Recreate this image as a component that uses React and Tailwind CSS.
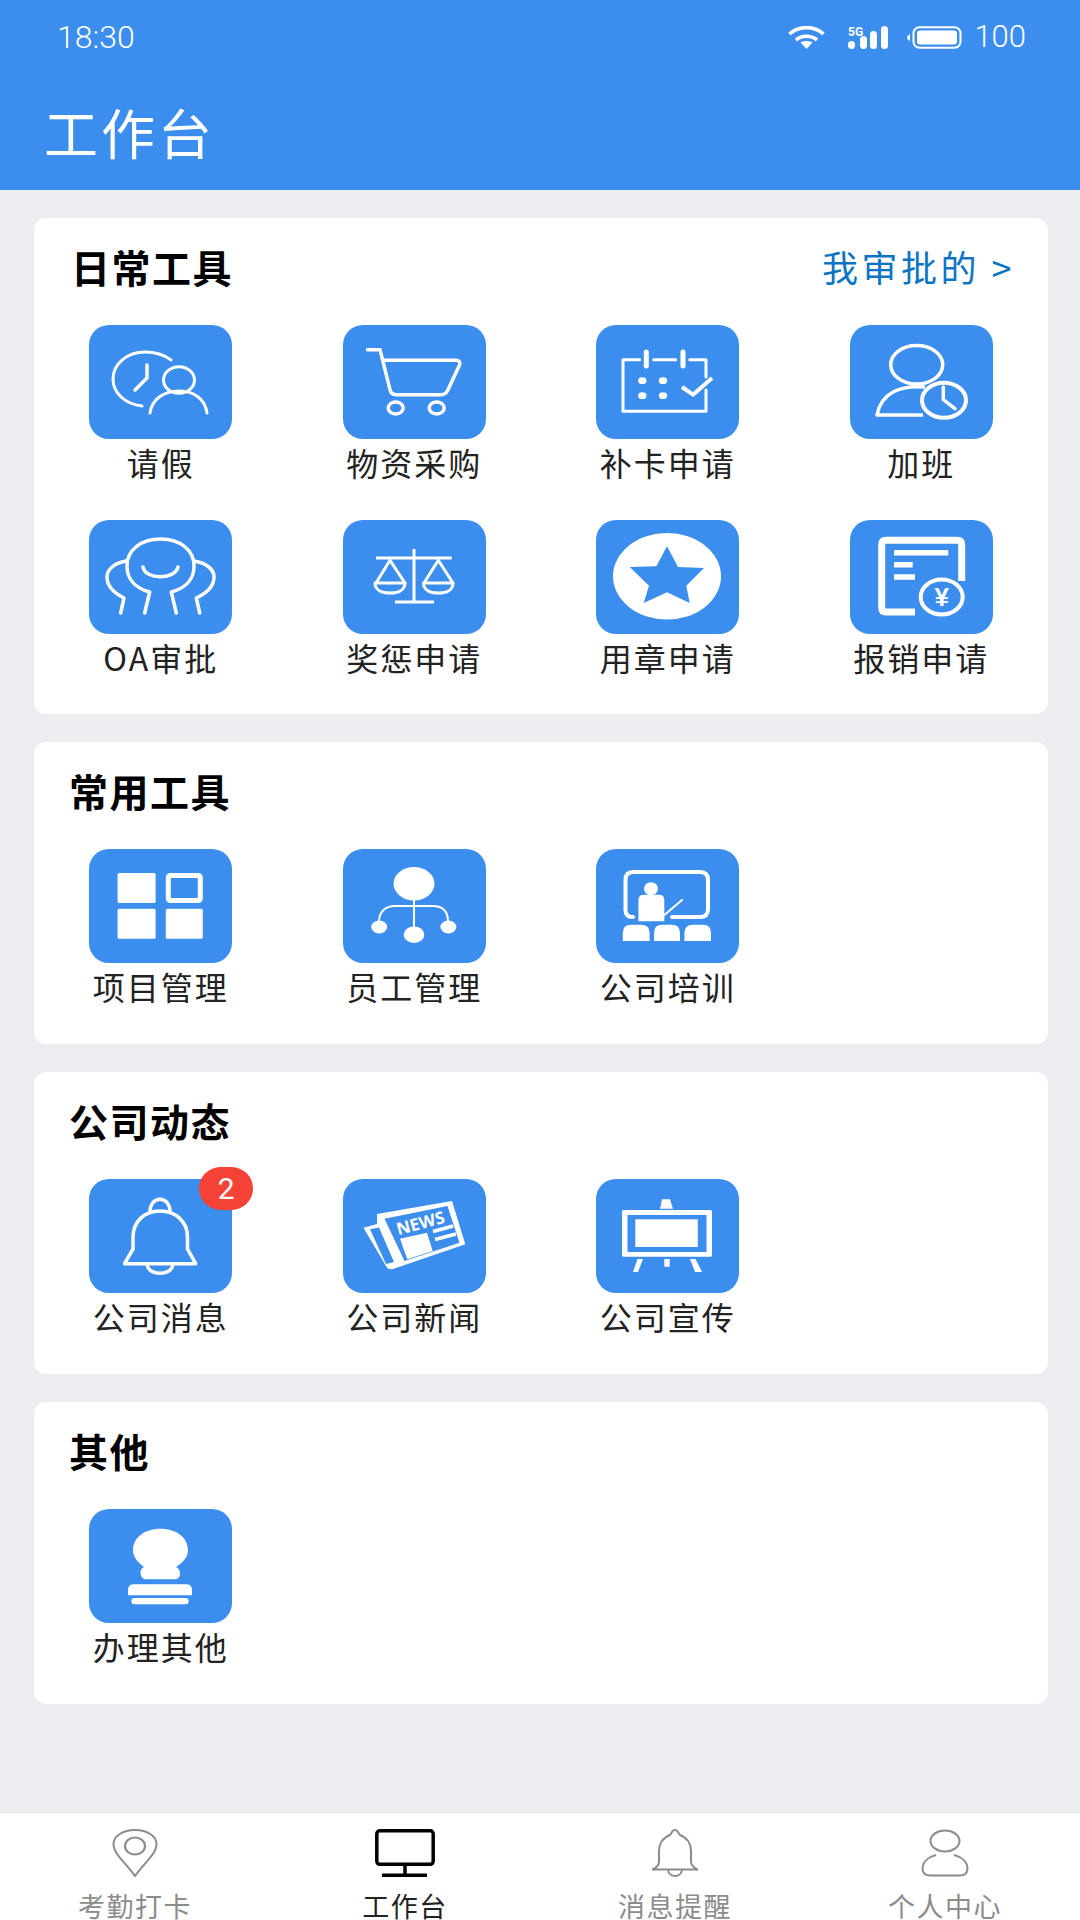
import React from "react";

const cjk = "font-['Noto_Sans_CJK_SC','Liberation_Sans',sans-serif]";

// every tile drawing uses the tile's own pixel box (143x114)
const Tile = ({ children, badge }) => (
  <div className="relative w-[143px] h-[114px] rounded-[20px] bg-[#3c8eee]">
    <svg
      viewBox="0 0 143 114"
      className="w-[143px] h-[114px]"
      fill="none"
      stroke="#fff"
      strokeWidth="3"
      strokeLinecap="round"
      strokeLinejoin="round"
    >
      {children}
    </svg>
    {badge && (
      <span className="absolute top-[-12px] right-[-21px] w-[54px] h-[43px] rounded-full bg-[#f44336] text-white text-[30px] leading-[43px] text-center font-['Roboto',sans-serif]">
        {badge}
      </span>
    )}
  </div>
);

const Leave = () => (
  <>
    <path d="M82 35C74 29 65 27 56 27C38 27 24 39 24 54C24 68 36 79 53 81" />
    <path d="M58 40V53L46 65" strokeWidth="3.5" />
    <ellipse cx="90" cy="55" rx="15.5" ry="13.3" />
    <path d="M61 88C63 74 75 66 90 66S116 74 118 88" />
  </>
);

const Cart = () => (
  <>
    <path d="M24.5 24.7H37L47 64.7Q48 69.7 53 69.7H98Q103 69.7 105 64.7L116.5 40Q118 35.3 113 35.3H40.3" strokeWidth="3.5" />
    <ellipse cx="52.7" cy="83" rx="7.5" ry="6" strokeWidth="3.5" />
    <ellipse cx="93.7" cy="83" rx="7.5" ry="6" strokeWidth="3.5" />
  </>
);

const Calendar = () => (
  <>
    <path d="M43.7 34.7H27V86.3H110V65M110 52V34.7H93.7M57.7 34.7H79.7" />
    <path d="M50.3 27V41M87 27V41" strokeWidth="5" />
    <g fill="#fff" stroke="none">
      <ellipse cx="46.3" cy="55.7" rx="4.2" ry="3.4" />
      <ellipse cx="67" cy="55.7" rx="4.2" ry="3.4" />
      <ellipse cx="46.3" cy="70.7" rx="4.2" ry="3.4" />
      <ellipse cx="67" cy="70.7" rx="4.2" ry="3.4" />
    </g>
    <path d="M86 62L97 69.7L116 53" strokeWidth="4" strokeLinecap="butt" />
  </>
);

const Overtime = () => (
  <>
    <ellipse cx="66.7" cy="39.7" rx="26" ry="19.3" strokeWidth="3.5" />
    <path d="M75 62C50 60 31 68 27 90H73" strokeWidth="3.5" strokeLinecap="butt" />
    <ellipse cx="94" cy="75.3" rx="22" ry="17.5" fill="#3c8eee" strokeWidth="4" />
    <path d="M93.3 62V74.7L105 83.7" strokeWidth="3.5" />
  </>
);

const Approve = () => (
  <g strokeWidth="3.5">
    <path d="M55.7 93L60.7 72C45 68 38 58 38 46C38 30 52 19 71.5 19C91 19 105 30 105 46C105 58 98 68 82.3 72L87.3 93" />
    <path d="M31.7 93L35 78C25 73 18 67 18 57C18 49 26 43 37 41" />
    <path d="M110.7 93L107.3 78C118 73 125 67 125 57C125 49 117 43 105 41" />
    <path d="M54 47C56 60 86 60 89 47" />
  </g>
);

const Scale = () => (
  <>
    <path d="M71 29V81M33 38H108.7M52 82H91" strokeLinecap="butt" />
    <path d="M47 40.3L33 63H62Z" />
    <path d="M32 63C32 70 39 73 47 73S62 70 62 63" />
    <path d="M95.3 40.3L81 63H110Z" />
    <path d="M80.5 63C80.5 70 87 73 95.3 73S110 70 110 63" />
  </>
);

const Seal = () => (
  <>
    <ellipse cx="71" cy="56.3" rx="54" ry="43.3" fill="#fff" stroke="none" />
    <path
      d="M71 26.3L82 47L108 48L90.3 65.7L93.7 83L71 72.3L47.7 83L53 65.7L33.7 47L60.3 46.3Z"
      fill="#3c8eee"
      stroke="none"
    />
  </>
);

const Expense = () => (
  <>
    <path
      d="M65 92H36Q31.7 92 31.7 88V24.5Q31.7 20.3 36 20.3H107Q111.7 20.3 111.7 24.5V61"
      strokeWidth="7"
      strokeLinecap="butt"
    />
    <path d="M44 32.7H98.3M44 44.7H62.7M44 57H65" strokeWidth="5.5" strokeLinecap="butt" />
    <ellipse cx="91.7" cy="77" rx="21" ry="17.5" strokeWidth="4" fill="#3c8eee" />
    <text
      x="91.7"
      y="86"
      textAnchor="middle"
      fill="#fff"
      stroke="none"
      fontSize="26"
      fontWeight="700"
      fontFamily="Liberation Sans, sans-serif"
    >
      ¥
    </text>
  </>
);

const Project = () => (
  <>
    <g fill="#fff" stroke="none">
      <rect x="28.6" y="24" width="38" height="30" rx="1.5" />
      <rect x="28.6" y="59.7" width="38" height="30" rx="1.5" />
      <rect x="76.8" y="59.7" width="37" height="30" rx="1.5" />
    </g>
    <rect x="79.3" y="26.5" width="32" height="25" rx="2" strokeWidth="5" />
  </>
);

const Staff = () => (
  <>
    <g fill="#fff" stroke="none">
      <ellipse cx="71" cy="34.7" rx="20.5" ry="16.7" />
      <ellipse cx="36.2" cy="78" rx="8" ry="6.5" />
      <ellipse cx="105.4" cy="78" rx="8" ry="6.5" />
      <ellipse cx="71" cy="85.7" rx="10.3" ry="8.3" />
    </g>
    <path d="M71 50V80M36 73C36 63 42 57 52 57H90C100 57 105 63 105 73" strokeWidth="2" />
  </>
);

const Training = () => (
  <>
    <path
      d="M37 68Q29.5 68 29.5 61V31Q29.5 23 37 23H104Q112 23 112 31V60Q112 68 104 68H76"
      strokeWidth="4"
    />
    <path d="M66 68L86 51" strokeWidth="2" />
    <g fill="#fff" stroke="none">
      <ellipse cx="55" cy="39.7" rx="7" ry="6.5" />
      <path d="M42.4 51Q42.4 45.7 48 45.7H63Q68.3 45.7 68.3 51V72.3H42.4Z" />
      <path d="M26.8 92V84Q26.8 75.7 35 75.7H45Q53.6 75.7 53.6 84V92Z" />
      <path d="M58 92V84Q58 75.7 66 75.7H76Q84 75.7 84 84V92Z" />
      <path d="M88.4 92V84Q88.4 75.7 97 75.7H107Q115 75.7 115 84V92Z" />
    </g>
  </>
);

const BellTile = () => (
  <g strokeWidth="3.5">
    <path d="M71 32C55 32 44 43 44 58V70L35.5 84.7H106.7L98.5 70V58C98.5 43 87 32 71 32Z" />
    <path d="M61 33C61 16 81 16 81 33" />
    <path d="M58 86C60 97 82 97 84 86" />
  </g>
);

const News = () => (
  <>
    <path
      d="M34 35L109 22L122.3 65.3L50 90Q45 91 43 87L20.5 48.7L34 45Z"
      fill="#fff"
      stroke="none"
    />
    <path d="M41.5 39.7L104.5 27L116.5 63.7L61.5 82Z" fill="#3c8eee" stroke="none" />
    <path d="M27 50.3L36 48.5L51 83L43 85Z" fill="#3c8eee" stroke="none" />
    <text
      x="0"
      y="0"
      transform="translate(79 50) rotate(-15)"
      textAnchor="middle"
      fill="#fff"
      stroke="none"
      fontSize="17"
      fontWeight="700"
      fontFamily="Open Sans, sans-serif"
    >
      NEWS
    </text>
    <path d="M57 59.7L84 53.7L89.7 72L64.3 80.3Z" fill="#fff" stroke="none" />
    <path d="M90 52.5L110 47M92 60.5L113 55" strokeWidth="3.5" strokeLinecap="butt" />
  </>
);

const Easel = () => (
  <g fill="#fff" stroke="none">
    <path d="M66 20.3H74L77 29.7H64Z" />
    <rect x="26" y="31" width="90" height="46.7" rx="1.5" />
    <rect x="31.5" y="36" width="79" height="37" fill="#3c8eee" />
    <rect x="39.3" y="40.3" width="62.5" height="27.7" />
    <path d="M41.5 80H47L42 93H37Z" />
    <rect x="68.3" y="80" width="5.4" height="7.7" />
    <path d="M94 80H99.5L106 93H99Z" />
  </g>
);

const Stamp = () => (
  <g fill="#fff" stroke="none">
    <path d="M71.5 19.7C55 19.7 44 29 44 41C44 49 50 54 55 58C51 60 51.7 63 51.7 65C51.7 68 54 70.3 58 70.3H85C89 70.3 91 68 91 65C91 63 91 60 87 58C93 54 99 49 99 41C99 29 88 19.7 71.5 19.7Z" />
    <path d="M39 86.3V81Q39 75.3 45 75.3H97Q103 75.3 103 81V86.3Z" />
    <rect x="42.3" y="89" width="57.4" height="6.3" rx="3" />
  </g>
);

const sections = [
  {
    title: "日常工具",
    link: "我审批的 >",
    items: [
      ["请假", <Leave />],
      ["物资采购", <Cart />],
      ["补卡申请", <Calendar />],
      ["加班", <Overtime />],
      ["OA审批", <Approve />],
      ["奖惩申请", <Scale />],
      ["用章申请", <Seal />],
      ["报销申请", <Expense />],
    ],
  },
  {
    title: "常用工具",
    items: [
      ["项目管理", <Project />],
      ["员工管理", <Staff />],
      ["公司培训", <Training />],
    ],
  },
  {
    title: "公司动态",
    items: [
      ["公司消息", <BellTile />, "2"],
      ["公司新闻", <News />],
      ["公司宣传", <Easel />],
    ],
  },
  {
    title: "其他",
    items: [["办理其他", <Stamp />]],
  },
];

const Card = ({ section, first }) => (
  <section
    className={`bg-white rounded-[12px] pt-[20px] ${first ? "pb-[30px]" : "pb-[31px]"}`}
  >
    <div
      className={`h-[56px] mb-[31px] flex items-center justify-between pr-[33px] ${first ? "pl-[37px]" : "pl-[35px]"}`}
    >
      <h2 className="text-[39px] font-bold tracking-[1.5px] text-black">
        {section.title}
      </h2>
      {section.link && (
        <span className="text-[36px] tracking-[3.5px] text-[#0d74c4]">
          {section.link}
        </span>
      )}
    </div>
    <div className="grid grid-cols-4 gap-y-[31px]">
      {section.items.map(([label, icon, badge]) => (
        <div key={label} className="flex flex-col items-center">
          <Tile badge={badge}>{icon}</Tile>
          <span className="h-[50px] leading-[46px] text-[32px] tracking-[2px] text-[#222]">
            {label}
          </span>
        </div>
      ))}
    </div>
  </section>
);

const navItems = [
  {
    label: "考勤打卡",
    icon: (
      <svg viewBox="0 0 46 48" className="w-[46px] h-[48px]" fill="none" stroke="#8c8c8c" strokeWidth="2">
        <path d="M23 47C14 34 1.5 25 1.5 15C1.5 7 11 1 23 1S44.5 7 44.5 15C44.5 25 32 34 23 47Z" />
        <ellipse cx="23" cy="17" rx="10" ry="8.5" strokeWidth="2.2" />
      </svg>
    ),
  },
  {
    label: "工作台",
    active: true,
    icon: (
      <svg viewBox="0 0 60 48" className="w-[60px] h-[48px]" fill="none" stroke="#000" strokeWidth="3.5">
        <rect x="1.8" y="1.8" width="56.4" height="33.5" rx="3" />
        <path d="M30 35V46M7 46.2H52" />
      </svg>
    ),
  },
  {
    label: "消息提醒",
    icon: (
      <svg viewBox="0 0 48 48" className="w-[48px] h-[48px]" fill="none" stroke="#8c8c8c" strokeWidth="2">
        <path d="M24 1C20 1 21 5 19 6C11 9 8 16 8 22V33C8 36 4 40 1 40.5H47C44 40 40 36 40 33V22C40 16 37 9 29 6C27 5 28 1 24 1Z" />
        <path d="M17 41C18 49 30 49 31 41" />
      </svg>
    ),
  },
  {
    label: "个人中心",
    icon: (
      <svg viewBox="0 0 48 48" className="w-[48px] h-[48px]" fill="none" stroke="#8c8c8c" strokeWidth="2">
        <ellipse cx="24" cy="12" rx="14.5" ry="10.5" />
        <path d="M15 26C7 28 1.5 33 1.5 40C1.5 45 5 46.5 10 46.5H38C43 46.5 46.5 45 46.5 40C46.5 33 41 28 33 26" />
      </svg>
    ),
  },
];

const StatusIcons = () => (
  <div className="flex items-center font-light">
    <svg viewBox="0 0 37 23" className="w-[37px] h-[23px]" fill="none" stroke="#fff" strokeWidth="3.6">
      <path d="M1.5 8C11 -0.5 26 -0.5 35.5 8" />
      <path d="M8 14C14 9 23 9 29 14" />
      <path d="M18.5 23L12.5 16.5C16 14.5 21 14.5 24.5 16.5Z" fill="#fff" stroke="none" />
    </svg>
    <svg viewBox="0 0 41 23" className="w-[41px] h-[23px] ml-[23px]" fill="#fff">
      <text x="0" y="10" fontSize="12" fontWeight="700" fontFamily="Roboto, sans-serif">5G</text>
      <rect x="0" y="15" width="7" height="8" rx="3.5" />
      <rect x="12" y="10" width="7" height="13" rx="3.5" />
      <rect x="22" y="5" width="7" height="18" rx="3.5" />
      <rect x="33" y="0" width="7" height="23" rx="3.5" />
    </svg>
    <svg viewBox="0 0 55 23" className="w-[55px] h-[23px] ml-[18px]" fill="none">
      <path d="M3 8V15Q0 13.5 0 11.5T3 8Z" fill="#fff" />
      <rect x="6.5" y="1.2" width="47" height="20.6" rx="6" stroke="#fff" strokeWidth="2" />
      <rect x="10" y="4.5" width="40" height="14" rx="3" fill="#fff" />
    </svg>
    <span className="ml-[12px] text-[31px]">100</span>
  </div>
);

export default function App() {
  return (
    <div className={`${cjk} w-[1080px] h-[1920px] flex flex-col overflow-hidden bg-[#ebedf1]`}>
      <header className="h-[190px] shrink-0 bg-[#3c8eee] text-white">
        <div className="h-[74px] pl-[57px] pr-[54px] flex items-center justify-between font-['Roboto',sans-serif]">
          <span className="text-[32px] font-light">18:30</span>
          <StatusIcons />
        </div>
        <h1 className="pl-[44px] mt-[28px] text-[54px] leading-[60px] tracking-[3px] font-normal">
          工作台
        </h1>
      </header>

      <main className="flex-1 pl-[34px] pr-[32px] pt-[28px] flex flex-col gap-[28px]">
        {sections.map((s, i) => (
          <Card key={s.title} section={s} first={i === 0} />
        ))}
      </main>

      <nav className="h-[108px] shrink-0 bg-white border-t border-[#e0e2e6] grid grid-cols-4">
        {navItems.map((item) => (
          <div key={item.label} className="flex flex-col items-center pt-[16px]">
            {item.icon}
            <span
              className={`mt-[12px] text-[27px] leading-[34px] tracking-[1.5px] whitespace-nowrap ${item.active ? "text-[#222]" : "text-[#8c8c8c]"}`}
            >
              {item.label}
            </span>
          </div>
        ))}
      </nav>
    </div>
  );
}
